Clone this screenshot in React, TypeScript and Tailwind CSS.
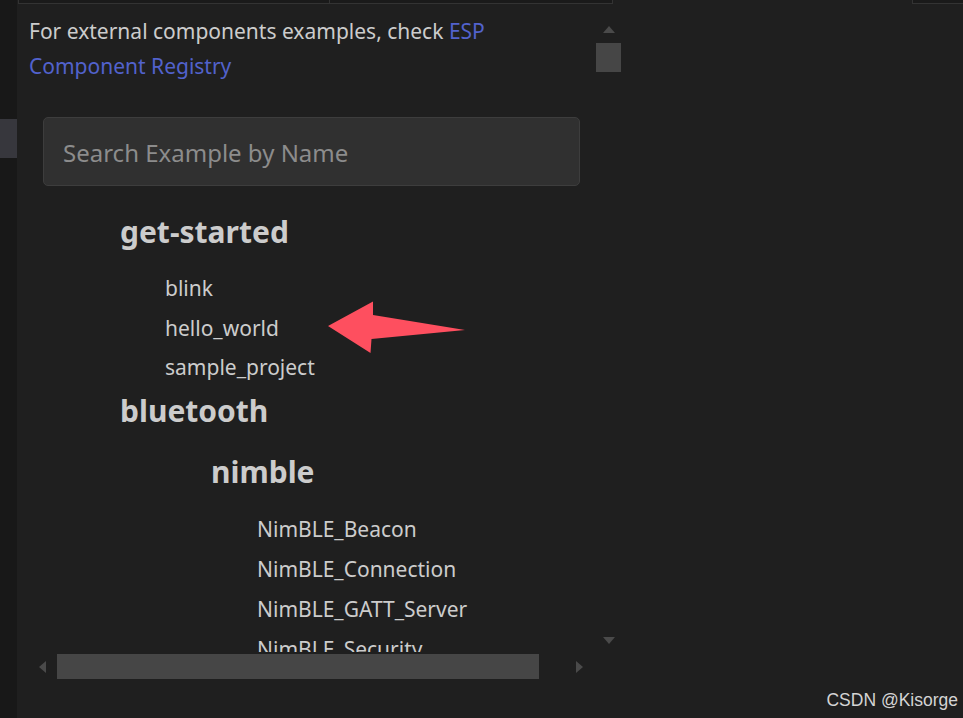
import React from "react"

const font = { fontFamily: '"Noto Sans", "Open Sans", sans-serif' }

const started = ["blink", "hello_world", "sample_project"]
const nimble = ["NimBLE_Beacon", "NimBLE_Connection", "NimBLE_GATT_Server", "NimBLE_Security"]

function Arrow() {
  return (
    <svg className="absolute left-[320px] top-[295px]" width="150" height="65" viewBox="320 295 150 65">
      <polygon points="328,326 373,301.5 373,315 465,330 371.5,339 370.5,353" fill="#fe4f5f" />
    </svg>
  )
}

export default function App() {
  return (
    <div className="relative flex w-[963px] h-[718px] bg-[#1f1f1f] overflow-hidden text-[#cccccc]" style={font}>
      {/* activity strip */}
      <div className="w-[17px] shrink-0 bg-[#181818]">
        <div className="mt-[119px] h-[39px] bg-[#37373d]" />
      </div>

      <div className="flex-1 flex flex-col">
        {/* cut-off tabs at the top */}
        <div className="flex h-[4px] shrink-0">
          <div className="ml-[1px] w-[312px] bg-[#1a1a1a] border-x border-b border-[#333333]" />
          <div className="w-[283px] bg-[#1a1a1a] border-r border-b border-[#333333]" />
          <div className="ml-auto w-[51px] bg-[#1a1a1a] border-l border-b border-[#333333]" />
        </div>

        <div className="flex h-[648px]">
          <div className="w-[579px] shrink-0 overflow-hidden pl-[12px] pt-[10px]">
            <p className="text-[21px] leading-[35px] w-[545px]">
              For external components examples, check{" "}
              <a className="text-[#5262cc]">ESP Component Registry</a>
            </p>

            <div className="mt-[33px] ml-[14px] w-[537px] h-[69px] flex items-center px-[19px] rounded-[5px] bg-[#303030] border border-[#3d3d3d]">
              <span className="text-[24px] pt-[2px] text-[#8c8c8c]">Search Example by Name</span>
            </div>

            <div className="ml-[91px]">
              <h2 className="mt-[25px] h-[40px] flex items-center text-[30px] font-bold">get-started</h2>
              <ul className="mt-[18px] ml-[45px]">
                {started.map((s) => (
                  <li key={s} className="h-[39.5px] flex items-center text-[21px]">{s}</li>
                ))}
              </ul>
              <h2 className="mt-[3px] h-[40px] flex items-center text-[30px] font-bold">bluetooth</h2>
              <h3 className="mt-[21px] ml-[91px] h-[40px] flex items-center text-[30px] font-bold">nimble</h3>
              <ul className="mt-[18px] ml-[137px]">
                {nimble.map((s) => (
                  <li key={s} className="h-[40px] flex items-center text-[21px] whitespace-nowrap">{s}</li>
                ))}
              </ul>
            </div>
          </div>

          {/* vertical scrollbar */}
          <div className="w-[25px] shrink-0 flex flex-col items-center pt-[22px] pb-[8px]">
            <div className="w-0 h-0 border-x-[6.5px] border-x-transparent border-b-[7px] border-b-[#4a4a4a]" />
            <div className="mt-[10px] w-[25px] h-[29px] bg-[#464646]" />
            <div className="mt-auto w-0 h-0 border-x-[6.5px] border-x-transparent border-t-[7px] border-t-[#4a4a4a]" />
          </div>
        </div>

        {/* horizontal scrollbar */}
        <div className="flex items-center h-[25px] w-[579px] mt-[2px] pl-[22px]">
          <div className="w-0 h-0 border-y-[6px] border-y-transparent border-r-[7px] border-r-[#4a4a4a]" />
          <div className="ml-[11px] w-[482px] h-[25px] bg-[#464646]" />
          <div className="ml-[37px] w-0 h-0 border-y-[6px] border-y-transparent border-l-[7px] border-l-[#4a4a4a]" />
        </div>

        <div
          className="mt-auto self-end mr-[5px] mb-[6px] text-[17.5px] leading-[24px] text-[#d4d4d4]"
          style={{ fontFamily: '"Liberation Sans", Arial, sans-serif' }}
        >
          CSDN @Kisorge
        </div>
      </div>

      <Arrow />
    </div>
  )
}
